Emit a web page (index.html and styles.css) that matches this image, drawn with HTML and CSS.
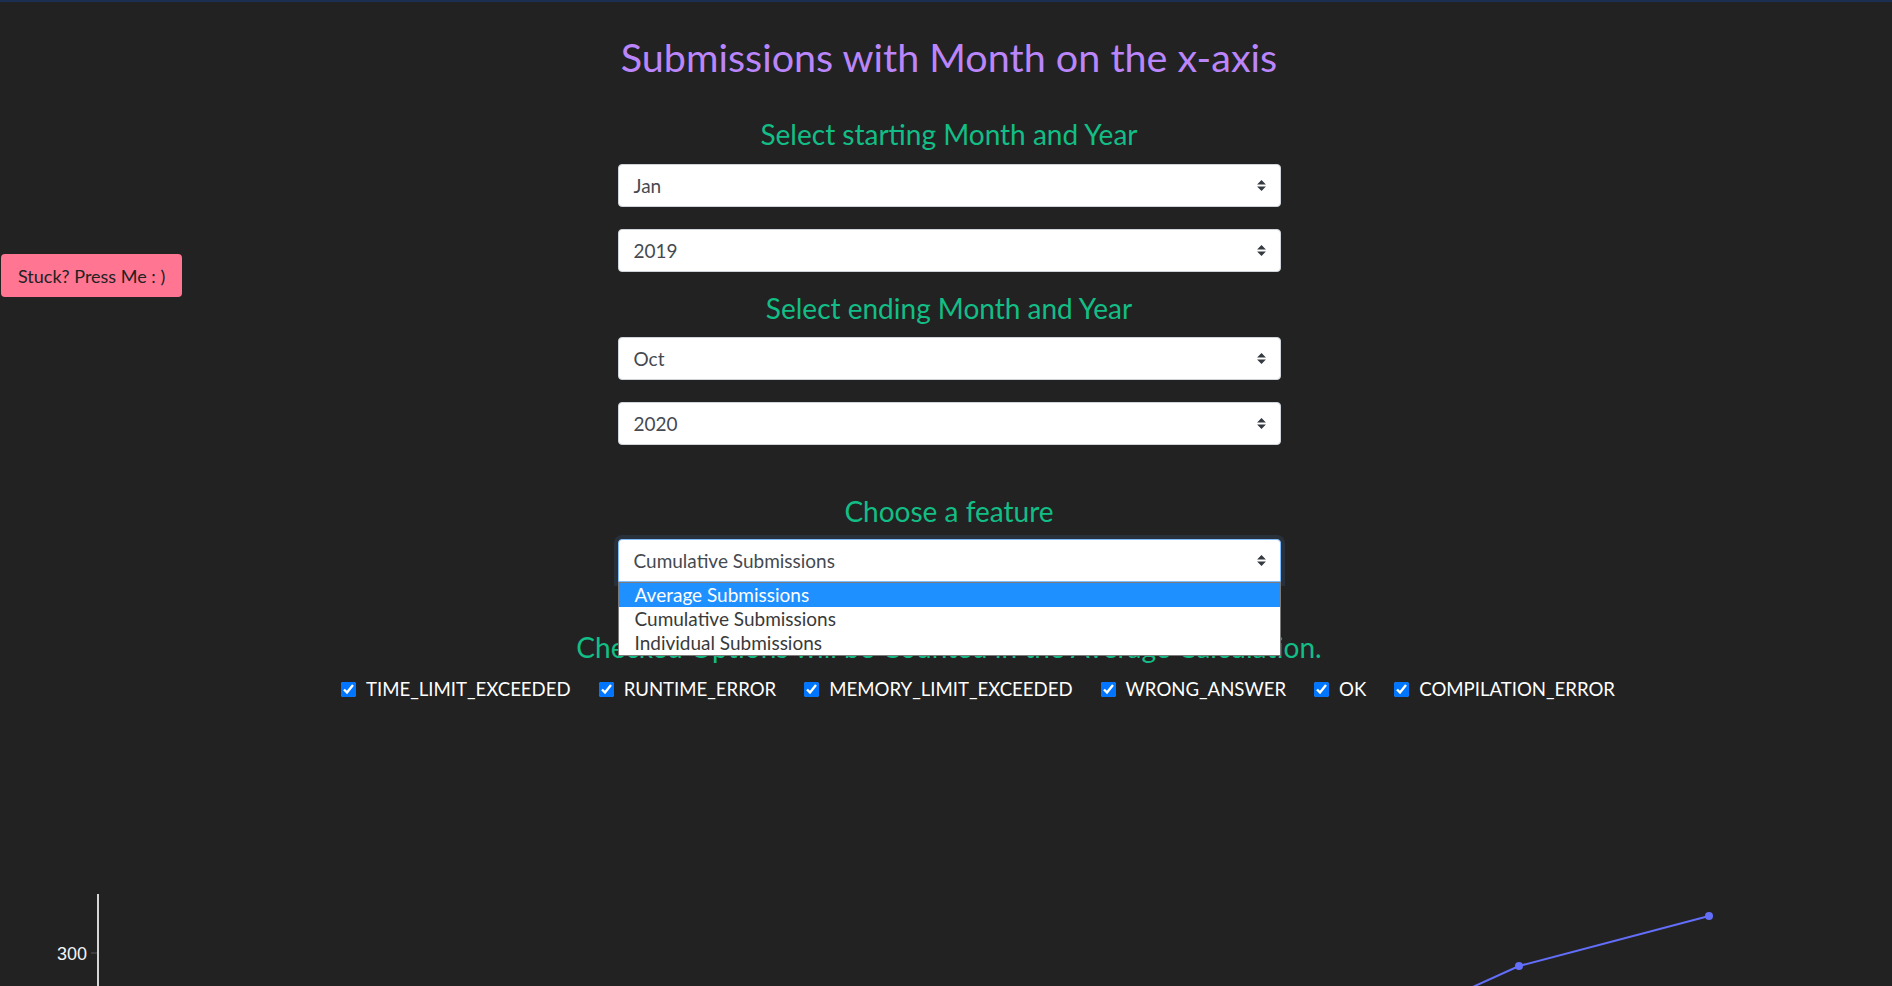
FILE: index.html
```html
<!DOCTYPE html>
<html lang="en">
<head>
<meta charset="utf-8">
<title>Submissions with Month on the x-axis</title>
<link rel="stylesheet" href="styles.css">
</head>
<body>
<div class="topbar"></div>
<button class="help-btn" type="button">Stuck? Press Me : )</button>
<main class="page">
  <section class="controls">
    <h1 class="title">Submissions with Month on the x-axis</h1>

    <h3 class="label label--start">Select starting Month and Year</h3>
    <div class="select select--first-a"><span>Jan</span><svg class="arrows" width="9" height="11" viewBox="0 0 4 5"><path d="M2 0L0 2h4zm0 5L0 3h4z"/></svg></div>
    <div class="select select--next"><span>2019</span><svg class="arrows" width="9" height="11" viewBox="0 0 4 5"><path d="M2 0L0 2h4zm0 5L0 3h4z"/></svg></div>

    <h3 class="label label--end">Select ending Month and Year</h3>
    <div class="select select--first-b"><span>Oct</span><svg class="arrows" width="9" height="11" viewBox="0 0 4 5"><path d="M2 0L0 2h4zm0 5L0 3h4z"/></svg></div>
    <div class="select select--next"><span>2020</span><svg class="arrows" width="9" height="11" viewBox="0 0 4 5"><path d="M2 0L0 2h4zm0 5L0 3h4z"/></svg></div>

    <h3 class="label label--feature">Choose a feature</h3>
    <div class="select-wrap">
      <div class="select select--focused"><span>Cumulative Submissions</span><svg class="arrows" width="9" height="11" viewBox="0 0 4 5"><path d="M2 0L0 2h4zm0 5L0 3h4z"/></svg></div>
      <ul class="dropdown">
        <li class="option option--active">Average Submissions</li>
        <li class="option">Cumulative Submissions</li>
        <li class="option">Individual Submissions</li>
      </ul>
    </div>

    <h3 class="label label--note">Checked Options will be Counted in the Average Calculation.</h3>
    <div class="checks">
      <label class="check"><input type="checkbox" checked><span>TIME_LIMIT_EXCEEDED</span></label>
      <label class="check"><input type="checkbox" checked><span>RUNTIME_ERROR</span></label>
      <label class="check"><input type="checkbox" checked><span>MEMORY_LIMIT_EXCEEDED</span></label>
      <label class="check"><input type="checkbox" checked><span>WRONG_ANSWER</span></label>
      <label class="check"><input type="checkbox" checked><span>OK</span></label>
      <label class="check"><input type="checkbox" checked><span>COMPILATION_ERROR</span></label>
    </div>
  </section>

  <svg class="chart" width="1892" height="300">
    <line x1="98" y1="174" x2="98" y2="300" class="axis"/>
    <line x1="91" y1="233" x2="97" y2="233" class="tick"/>
    <text x="87" y="240" class="tick-label">300</text>
    <polyline points="1422,290 1519,246 1709,196" class="series"/>
    <circle cx="1519" cy="246" r="4" class="marker"/>
    <circle cx="1709" cy="196" r="4" class="marker"/>
  </svg>
</main>
</body>
</html>
```
FILE: styles.css
```css
html, body {
  margin: 0;
  height: 986px;
  overflow: hidden;
}

body {
  background: #222222;
  font-family: Lato, "Open Sans", sans-serif;
}

.topbar {
  height: 2px;
  background: #1b2f52;
}

.help-btn {
  position: fixed;
  left: 1px;
  top: 254px;
  height: 43px;
  padding: 0 17px;
  border: none;
  border-radius: 4px;
  background: #ff7592;
  color: #222222;
  font-family: Lato, sans-serif;
  font-size: 18px;
  cursor: pointer;
}

.controls {
  text-align: center;
  padding-left: 6px;
}

.title {
  margin: 31px 0 0;
  font-size: 39.5px;
  line-height: 48px;
  font-weight: 400;
  color: #bb86fc;
}

.label {
  margin: 0;
  font-size: 28px;
  line-height: 33.6px;
  font-weight: 400;
  color: #12be86;
}

.label--start { margin-top: 37px; }
.label--end { margin-top: 20px; }
.label--feature { margin-top: 50px; }
.label--note {
  margin-top: 49.5px;
  white-space: nowrap;
}

.select {
  box-sizing: border-box;
  width: 663px;
  height: 43px;
  margin: 0 auto;
  padding: 0 14px 0 15px;
  display: flex;
  align-items: center;
  justify-content: space-between;
  background: #ffffff;
  border: 1px solid #ced4da;
  border-radius: 4px;
  font-size: 19px;
  color: #454a50;
  text-align: left;
}

.select--first-a { margin-top: 12px; }
.select--first-b { margin-top: 12px; }
.select--next { margin-top: 22px; }

.arrows {
  fill: #343a40;
}

.select-wrap {
  position: relative;
  width: 663px;
  margin: 10px auto 0;
}

.select--focused {
  border-color: #80bdff;
  box-shadow: 0 0 0 4px rgba(60, 100, 150, 0.22);
  border-radius: 4px 4px 0 0;
}

.dropdown {
  position: absolute;
  top: 100%;
  left: 0;
  right: 0;
  z-index: 2;
  margin: 0;
  padding: 0;
  list-style: none;
  background: #ffffff;
  border: 1px solid #7a7a7a;
  text-align: left;
}

.option {
  height: 24px;
  line-height: 24px;
  padding-left: 16px;
  font-size: 19px;
  color: #3a3a3a;
}

.option--active {
  background: #1e90ff;
  color: #ffffff;
}

.checks {
  display: flex;
  justify-content: center;
  gap: 28px;
  margin-top: 11px;
  padding-left: 58px;
  font-size: 18.6px;
  line-height: 27px;
  color: #ffffff;
}

.check {
  display: flex;
  align-items: center;
  gap: 10px;
}

.check input {
  width: 15px;
  height: 15px;
  margin: 0;
  accent-color: #0075ff;
}

.chart {
  display: block;
  margin-top: 17.5px;
}

.axis {
  stroke: #d6d6d6;
  stroke-width: 2;
}

.tick {
  stroke: #555555;
  stroke-width: 1;
}

.tick-label {
  font-family: "Liberation Sans", Arial, sans-serif;
  font-size: 18px;
  fill: #f2f5fa;
  text-anchor: end;
}

.series {
  fill: none;
  stroke: #636efa;
  stroke-width: 2;
}

.marker {
  fill: #636efa;
}
```
